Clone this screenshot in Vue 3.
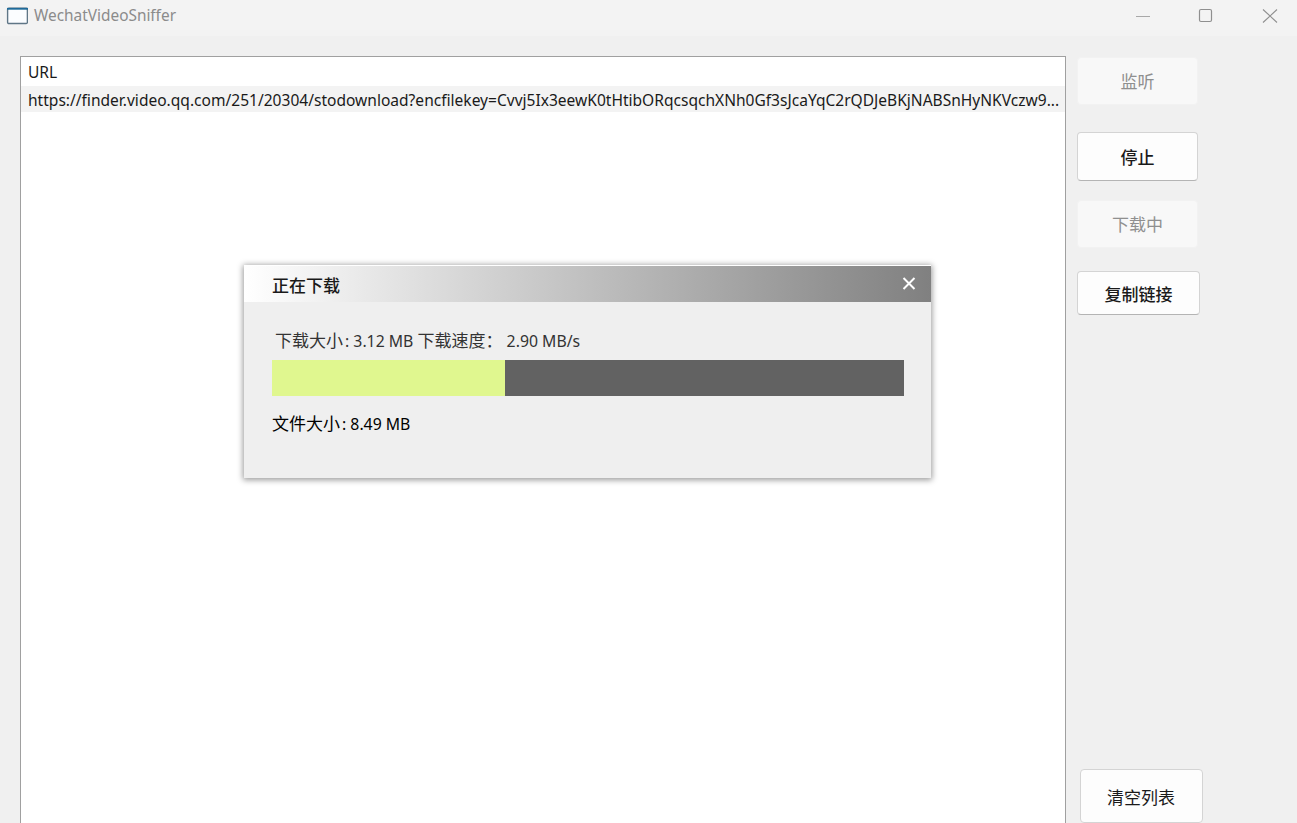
<script setup>
const url = 'https://finder.video.qq.com/251/20304/stodownload?encfilekey=Cvvj5Ix3eewK0tHtibORqcsqchXNh0Gf3sJcaYqC2rQDJeBKjNABSnHyNKVczw9...'
const percent = 36.8
</script>

<template>
  <div class="window">
    <header class="titlebar">
      <div class="title">
        <svg class="app-icon" width="22" height="18" viewBox="0 0 22 18">
          <rect x="1.6" y="1.2" width="19.8" height="15.3" rx="1.2" fill="#fbfdff" stroke="#5f7686" stroke-width="1.4" />
          <path d="M1 1.8h21" stroke="#1e6a9a" stroke-width="1.8" />
        </svg>
        <span>WechatVideoSniffer</span>
      </div>
      <div class="controls">
        <svg width="16" height="16" viewBox="0 0 16 16"><path d="M2 8.5h14" stroke="#a8a8a8" stroke-width="1" /></svg>
        <svg width="16" height="16" viewBox="0 0 16 16"><rect x="1.5" y="1.5" width="12" height="12" rx="1.5" fill="none" stroke="#8f8f8f" stroke-width="1.2" /></svg>
        <svg width="16" height="16" viewBox="0 0 16 16"><path d="M1 1.5l14 13M15 1.5l-14 13" stroke="#8f8f8f" stroke-width="1.1" /></svg>
      </div>
    </header>

    <main class="content">
      <section class="list">
        <div class="list-head">URL</div>
        <div class="list-row">{{ url }}</div>
      </section>
      <aside class="side">
        <button class="btn btn-listen" disabled>监听</button>
        <button class="btn btn-stop">停止</button>
        <button class="btn btn-downloading" disabled>下载中</button>
        <button class="btn btn-copy">复制链接</button>
        <button class="btn btn-clear">清空列表</button>
      </aside>
    </main>

    <div class="dialog">
      <div class="dialog-head">
        <span>正在下载</span>
        <svg class="dialog-close" width="14" height="13" viewBox="0 0 14 13"><path d="M1.5 1l11 11M12.5 1l-11 11" stroke="#fff" stroke-width="2" /></svg>
      </div>
      <div class="dialog-body">
        <div class="stats"><span class="cjk size-label">下载大小</span>: 3.12 MB <span class="cjk">下载速度：</span> 2.90 MB/s</div>
        <div class="progress"><div class="progress-fill" :style="{ width: percent + '%' }"></div></div>
        <div class="total"><span class="cjk size-label">文件大小</span>: 8.49 MB</div>
      </div>
    </div>
  </div>
</template>

<style scoped>
.window {
  position: relative;
  height: 823px;
  overflow: hidden;
  background: #f0f0f0;
  font-family: "Noto Sans", "Noto Sans CJK SC", sans-serif;
  font-size: 15.55px;
  color: #1a1a1a;
}
.titlebar {
  height: 36px;
  background: #f3f3f3;
  display: flex;
  align-items: center;
  justify-content: space-between;
  padding: 0 19px 5px 6px;
  box-sizing: border-box;
}
.title {
  display: flex;
  align-items: center;
  gap: 6px;
  color: #8b8b8b;
  font-size: 15.4px;
}
.controls {
  display: flex;
  gap: 48px;
}
.content {
  display: flex;
  padding: 20px 0 0 20px;
  height: 787px;
  box-sizing: border-box;
}
.list {
  width: 1046px;
  height: 800px;
  flex: none;
  background: #fff;
  border: 1px solid #a0a0a0;
  box-sizing: border-box;
}
.list-head {
  height: 29px;
  line-height: 31px;
  padding-left: 7px;
}
.list-row {
  height: 26px;
  line-height: 28px;
  padding-left: 7px;
  background: #f3f3f3;
  white-space: nowrap;
  overflow: hidden;
}
.side {
  display: flex;
  flex-direction: column;
  align-items: flex-start;
  padding: 0 0 0 11px;
}
.btn {
  box-sizing: border-box;
  width: 121px;
  font: inherit;
  font-family: "Noto Sans CJK SC", sans-serif;
  font-size: 17px;
  padding: 0 0 2px;
  border-radius: 4px;
  background: #fdfdfd;
  border: 1px solid #d4d4d4;
  border-bottom-color: #b4b4b4;
  color: #1a1a1a;
}
.btn[disabled] {
  background: #f8f8f8;
  border-color: #f2f2f2;
  color: #8f8f8f;
}
.btn-listen { height: 48px; margin-top: 1px; }
.btn-stop { height: 49px; margin-top: 27px; padding: 0; font-weight: 500; }
.btn-downloading { height: 48px; margin-top: 19px; }
.btn-copy { height: 44px; width: 123px; margin-top: 23px; padding: 0; font-weight: 500; }
.btn-clear { height: 54px; width: 123px; margin-top: auto; margin-left: 3px; padding: 0 1px 0 0; border-bottom-color: #d4d4d4; }
.dialog {
  position: absolute;
  left: 244px;
  top: 265px;
  width: 687px;
  height: 213px;
  background: #efefef;
  box-shadow: 0 1px 6px 1px rgba(0, 0, 0, 0.4);
}
.dialog-head {
  height: 37px;
  box-sizing: border-box;
  border-top: 1px solid #fff;
  background: linear-gradient(90deg, #ffffff 0%, #808080 100%);
  display: flex;
  align-items: center;
  justify-content: space-between;
  padding: 0 15px 0 28px;
  font-family: "Noto Sans CJK SC", sans-serif;
  font-size: 17px;
  font-weight: 500;
}
.dialog-close { margin-top: -2px; }
.dialog-body { padding: 26px 27px 0 28px; }
.stats {
  padding-left: 3px;
  height: 32px;
  line-height: 24px;
  color: #333;
  font-size: 15.8px;
  white-space: nowrap;
}
.cjk {
  font-family: "Noto Sans CJK SC", sans-serif;
  font-size: 17px;
}
.size-label {
  margin-right: 2px;
}
.progress {
  height: 36px;
  background: #626262;
}
.progress-fill {
  height: 100%;
  background: #e0f78f;
}
.total {
  margin-top: 14px;
  line-height: 26px;
  font-size: 15.8px;
  color: #000;
}
</style>
